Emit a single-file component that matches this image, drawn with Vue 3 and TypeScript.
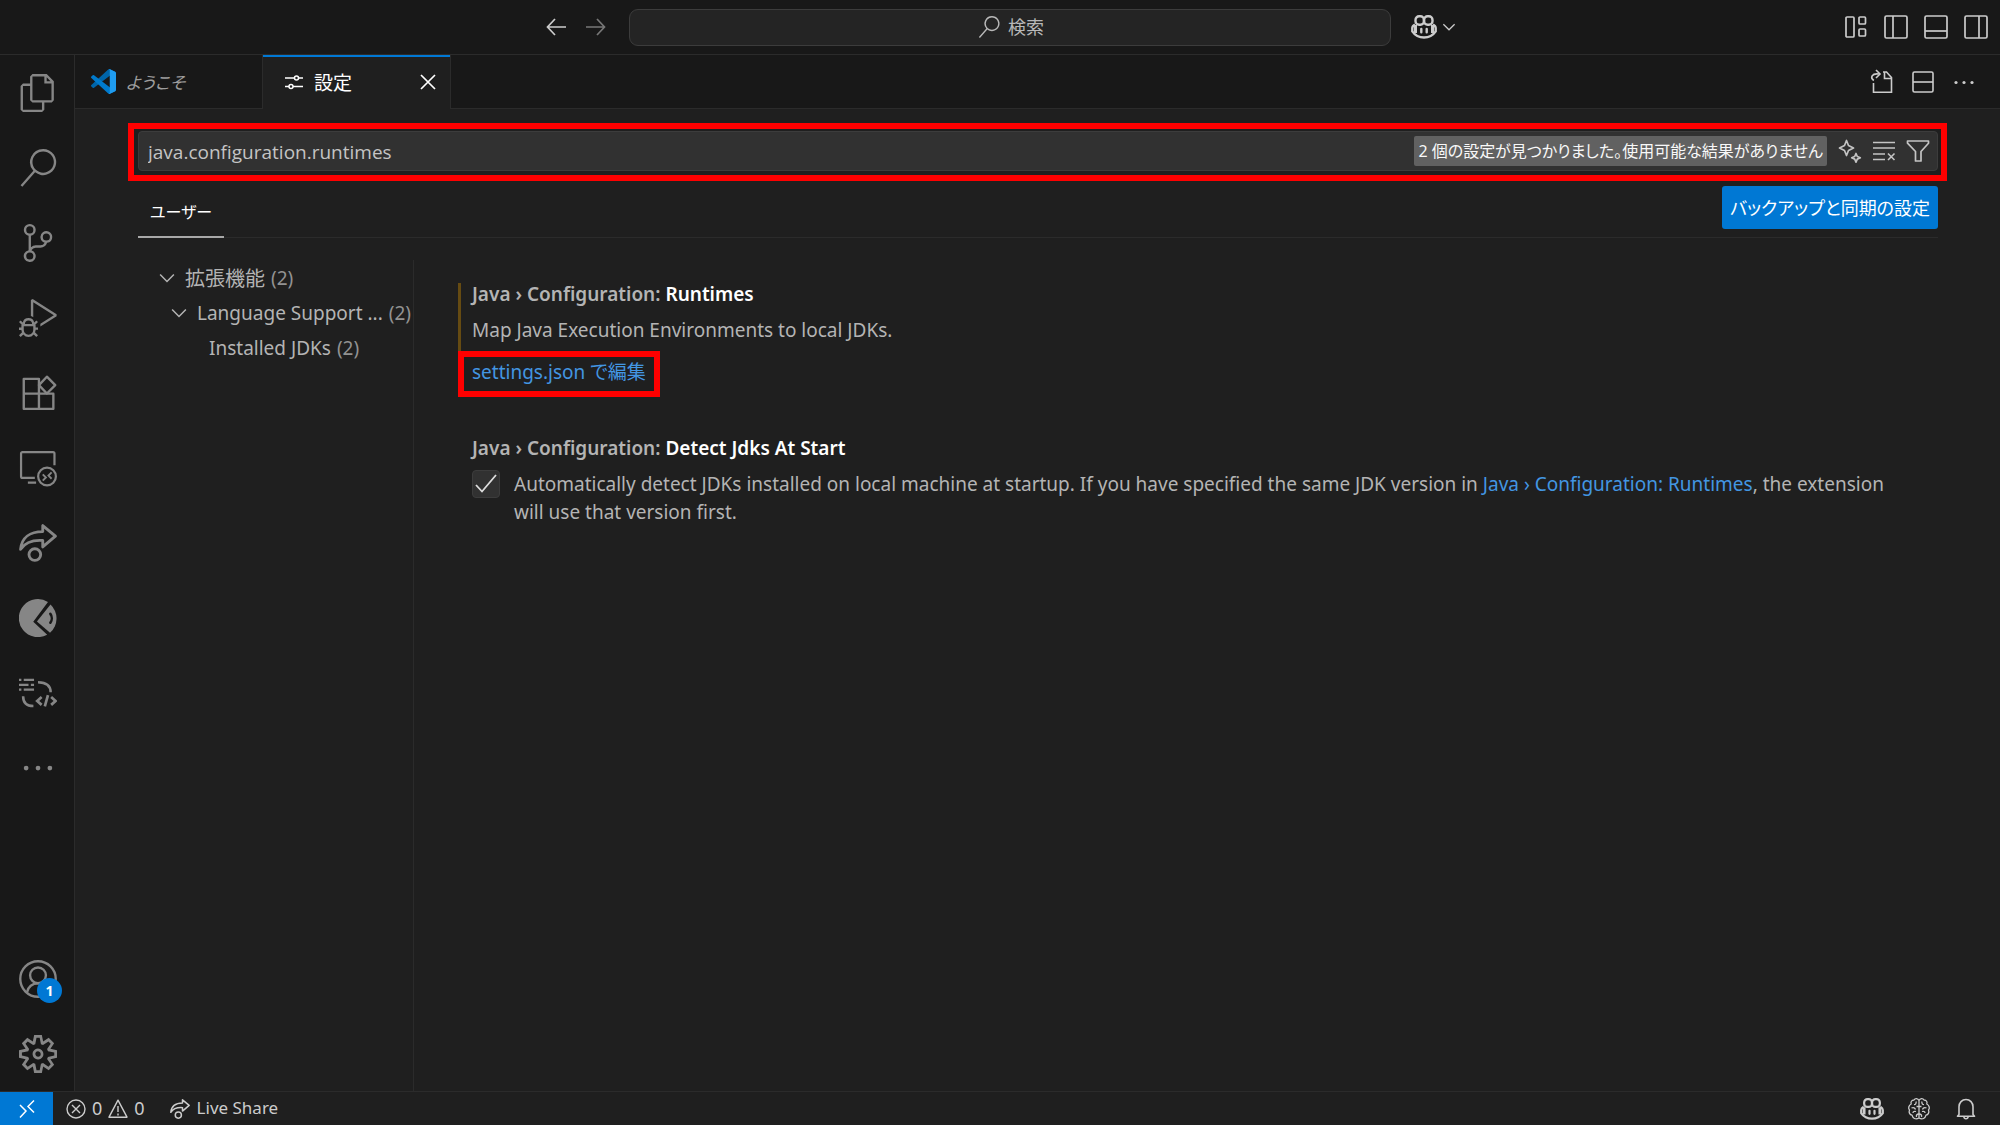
<script setup lang="ts">
import { ref } from 'vue'

interface ActivityItem {
  id: string
  label: string
}

const topItems: ActivityItem[] = [
  { id: 'files', label: 'エクスプローラー' },
  { id: 'search', label: '検索' },
  { id: 'scm', label: 'ソース管理' },
  { id: 'debug', label: '実行とデバッグ' },
  { id: 'extensions', label: '拡張機能' },
  { id: 'remote', label: 'リモート エクスプローラー' },
  { id: 'share', label: 'Live Share' },
  { id: 'disc', label: 'GitLens' },
  { id: 'convert', label: 'コード変換' },
  { id: 'more', label: 'その他' },
]

const query = ref('java.configuration.runtimes')
const detect = ref(true)
</script>

<template>
  <div class="workbench">
    <svg class="defs" aria-hidden="true">
      <symbol id="i-files" viewBox="0 0 24 24"><path fill="currentColor" d="M17.5 0h-9L7 1.5V6H2.5L1 7.5v15.07L2.5 24h12.07L16 22.57V18h4.7l1.3-1.43V4.5L17.5 0zm0 2.12l2.38 2.38H17.5V2.12zm-3 20.38h-12v-15H7v9.07L8.5 18h6v4.5zm6-6h-12v-15H16V6h4.5v10.5z" /></symbol>
      <symbol id="i-search" viewBox="0 0 24 24"><path fill="currentColor" d="M15.25 0a8.25 8.25 0 0 0-6.18 13.72L1 22.88l1.12 1 8.05-9.12A8.251 8.251 0 1 0 15.25.01V0zm0 15a6.75 6.75 0 1 1 0-13.5 6.75 6.75 0 0 1 0 13.5z" /></symbol>
      <symbol id="i-scm" viewBox="0 0 24 24"><path fill="currentColor" d="M21.007 8.222A3.738 3.738 0 0 0 15.045 5.2a3.737 3.737 0 0 0 1.156 6.583 2.988 2.988 0 0 1-2.668 1.67h-2.99a4.456 4.456 0 0 0-2.989 1.165V7.4a3.737 3.737 0 1 0-1.494 0v9.117a3.776 3.776 0 1 0 1.816.099 2.99 2.99 0 0 1 2.668-1.667h2.99a4.484 4.484 0 0 0 4.223-3.039 3.736 3.736 0 0 0 3.25-3.687zM4.565 3.738a2.242 2.242 0 1 1 4.484 0 2.242 2.242 0 0 1-4.484 0zm4.484 16.441a2.242 2.242 0 1 1-4.484 0 2.242 2.242 0 0 1 4.484 0zm8.221-9.715a2.242 2.242 0 1 1 0-4.485 2.242 2.242 0 0 1 0 4.485z" /></symbol>
      <symbol id="i-debug" viewBox="0 0 24 24"><path fill="currentColor" d="M10.94 13.5l-1.32 1.32a3.73 3.73 0 0 0-7.24 0L1.06 13.5 0 14.56l1.72 1.72-.22.22V18H0v1.5h1.5v.08c.077.489.214.966.41 1.42L0 22.94 1.06 24l1.65-1.65A4.308 4.308 0 0 0 6 24a4.31 4.31 0 0 0 3.29-1.65L10.94 24 12 22.94 10.09 21c.198-.464.336-.951.41-1.45v-.1H12V18h-1.5v-1.5l-.22-.22L12 14.56l-1.06-1.06zM6 13.5a2.25 2.25 0 0 1 2.25 2.25h-4.5A2.25 2.25 0 0 1 6 13.5zm3 6a3.33 3.33 0 0 1-3 3 3.33 3.33 0 0 1-3-3v-2.25h6v2.25zm14.76-9.9v1.26L13.5 17.37V15.6l8.5-5.37L9 2v9.46a5.07 5.07 0 0 0-1.5-.72V.63L8.64 0l15.12 9.6z" /></symbol>
      <symbol id="i-extensions" viewBox="0 0 24 24"><g fill="none" stroke="currentColor" stroke-width="1.5" stroke-linejoin="round"><path d="M3 3.100h9.600v18.900H3zM3 12.400h18.700v9.600H3z" /><path d="M17.600 1.700l5.300 5.300-5.300 5.300-5-5.300z" /></g></symbol>
      <symbol id="i-remote" viewBox="0 0 24 24"><g fill="none" stroke="currentColor" stroke-width="1.400"><path d="M10 18.300H2.200a.9.900 0 0 1-.9-.900V2.900a.9.900 0 0 1 .9-.900h19.300a.9.900 0 0 1 .9.900v7.300M5.600 21.300h5.200" /><circle cx="17.700" cy="17.400" r="5.600" /><path d="M15 16l2 2-2 2M20.600 14.800l-2 2 2 2" stroke-width="1.200" /></g></symbol>
      <symbol id="i-share" viewBox="0 0 24 24"><g fill="none" stroke="currentColor" stroke-width="1.800" stroke-linejoin="round"><path d="M15 1v3.800C7 4.800 1.600 8.500 1 16c3-4.600 8-6 14-5.600V14.500l8-6.800z" /><circle cx="10" cy="19.300" r="3.700" /></g></symbol>
      <symbol id="i-disc" viewBox="0 0 24 24"><path fill="currentColor" d="M18.300 1.900A12 12 0 1 0 17.800 22.500L9 14.400z" /><path fill="currentColor" d="M19.900 3.500A12 12 0 0 1 19.600 21.300L11.300 14.200z" /><path fill="none" stroke="#181818" stroke-width="1.600" stroke-linecap="round" d="M19.800 9.400c1.200 1.600 1.200 4 0 5.600" /></symbol>
      <symbol id="i-convert" viewBox="0 0 24 24"><g fill="none" stroke="currentColor" stroke-width="1.400"><path d="M0 3.700h1.500M3 3.700h6.500M0 6.800h6M7.500 6.800h2M0 9.900h1.500M3 9.900h6.500" /><path d="M12 5.200c5 .1 8 2 8 6.400" stroke-width="1.600" /><path d="M2.600 14c0 4 2.400 6.200 6.500 6.200" stroke-width="1.600" /><path d="M14.300 14.500L11.500 17l2.800 2.500M20.300 14.500l2.800 2.500-2.800 2.500M18.300 13.400l-2 7" stroke-width="1.700" /></g></symbol>
      <symbol id="i-more" viewBox="0 0 24 24"><g fill="currentColor"><circle cx="4.500" cy="12" r="1.500" /><circle cx="12" cy="12" r="1.500" /><circle cx="19.500" cy="12" r="1.500" /></g></symbol>
      <symbol id="i-account" viewBox="0 0 24 24"><g fill="none" stroke="currentColor" stroke-width="1.500"><circle cx="12" cy="12" r="11.200" /><circle cx="12" cy="9.700" r="5" /><path d="M5 20.500c.6-3.600 3.500-5.800 7-5.800s6.400 2.200 7 5.800" /></g></symbol>
      <symbol id="i-gear" viewBox="0 0 24 24"><path fill="currentColor" d="M19.850 8.750l4.150.830v4.840l-4.150.830 2.350 3.520-3.430 3.430-3.520-2.350-.830 4.150H9.580l-.830-4.150-3.520 2.350-3.430-3.430 2.350-3.520L0 14.420V9.580l4.150-.830L1.800 5.230 5.230 1.800l3.520 2.350L9.580 0h4.840l.830 4.150 3.520-2.350 3.430 3.430-2.350 3.520zm-1.570 5.070l4-.810v-2l-4-.810-.540-1.300 2.290-3.430-1.430-1.430-3.430 2.290-1.300-.540-.810-4h-2l-.810 4-1.300.540-3.430-2.290-1.430 1.430L6.380 8.900l-.540 1.300-4 .810v2l4 .810.540 1.300-2.290 3.430 1.430 1.430 3.430-2.290 1.300.540.810 4h2l.810-4 1.300-.540 3.430 2.290 1.430-1.430-2.290-3.430.540-1.300zm-8.186-4.672A3.430 3.430 0 0 1 12 8.570 3.440 3.440 0 0 1 15.430 12a3.430 3.430 0 1 1-5.336-2.852zm.956 4.274c.281.188.612.288.950.288A1.700 1.700 0 0 0 13.710 12a1.710 1.710 0 1 0-2.660 1.422z" /></symbol>
      <symbol id="i-chevron" viewBox="0 0 16 16"><path fill="none" stroke="currentColor" stroke-width="1.100" d="M3 5.500l5 5 5-5" /></symbol>
      <symbol id="i-copilot" viewBox="0 0 26 26">
        <g fill="none" stroke="currentColor" stroke-width="2.400"><rect x="4.500" y="2.300" width="8.500" height="8.500" rx="3.600" /><rect x="13" y="2.300" width="8.500" height="8.500" rx="3.600" /><path d="M4 10.500c-1.600.9-2.700 2.200-2.700 3.600v3.300C4 21.400 8.600 23.500 13 23.500s9-2.100 11.700-6.100v-3.300c0-1.400-1.100-2.700-2.700-3.600" /><path d="M4.500 11v8M21.500 11v8" stroke-width="3" /></g>
        <path stroke="currentColor" stroke-width="2.400" stroke-linecap="round" d="M10.300 15v3.200M15.700 15v3.200" />
      </symbol>
    </svg>

    <header class="titlebar">
      <nav class="history" aria-label="履歴">
        <button type="button" aria-label="戻る"><svg class="ic20" viewBox="0 0 20 20"><path fill="none" stroke="#ccc" stroke-width="1.700" d="M9 2L1.500 10 9 18M1.500 10H20" /></svg></button>
        <button type="button" aria-label="進む"><svg class="ic20" viewBox="0 0 20 20"><path fill="none" stroke="#777" stroke-width="1.700" d="M11 2l7.500 8-7.500 8M18.500 10H0" /></svg></button>
      </nav>
      <button type="button" class="command">
        <svg class="ic22"><use href="#i-search" /></svg><span>検索</span>
      </button>
      <div class="title-right">
        <button type="button" class="copilot" aria-label="Copilot">
          <svg class="ic26"><use href="#i-copilot" /></svg><svg class="ic18"><use href="#i-chevron" /></svg>
        </button>
        <div class="layouts">
          <button type="button" aria-label="レイアウトのカスタマイズ"><svg class="ic24" viewBox="0 0 24 24"><g fill="none" stroke="#ccc" stroke-width="1.700"><rect x="2" y="2" width="8" height="20" rx="1" /><rect x="15" y="2" width="6.500" height="7" rx="1" /><rect x="15" y="14" width="6.500" height="7" rx="1" /></g></svg></button>
          <button type="button" aria-label="プライマリ サイド バー"><svg class="ic24" viewBox="0 0 24 24"><g fill="none" stroke="#ccc" stroke-width="1.700"><rect x="1" y="1" width="22" height="22" rx="1.500" /><path d="M9 1v22" /></g></svg></button>
          <button type="button" aria-label="パネル"><svg class="ic24" viewBox="0 0 24 24"><g fill="none" stroke="#ccc" stroke-width="1.700"><rect x="1" y="1" width="22" height="22" rx="1.500" /><path d="M1 16h22" /></g></svg></button>
          <button type="button" aria-label="セカンダリ サイド バー"><svg class="ic24" viewBox="0 0 24 24"><g fill="none" stroke="#ccc" stroke-width="1.700"><rect x="1" y="1" width="22" height="22" rx="1.500" /><path d="M15 1v22" /></g></svg></button>
        </div>
      </div>
    </header>

    <div class="middle">
      <nav class="activity" aria-label="アクティビティ バー">
        <button v-for="item in topItems" :key="item.id" type="button" class="act" :aria-label="item.label">
          <svg class="ic38"><use :href="'#i-' + item.id" /></svg>
        </button>
        <span class="spring"></span>
        <button type="button" class="act" aria-label="アカウント">
          <svg class="ic38"><use href="#i-account" /></svg><span class="count-badge">1</span>
        </button>
        <button type="button" class="act" aria-label="管理"><svg class="ic38"><use href="#i-gear" /></svg></button>
      </nav>

      <main class="editor">
        <div class="tabs">
          <button type="button" class="tab welcome">
            <svg class="ic25" viewBox="0 0 100 100">
              <path fill="#0065a9" d="M96.500 10.800L75.900.900a6.200 6.200 0 0 0-7.100 1.200L1.300 63.600a4.200 4.200 0 0 0 0 6.200l5.500 5a4.200 4.200 0 0 0 5.300.2L93.400 13.400c2.700-2.100 6.600-.1 6.600 3.300v-.3a6.200 6.200 0 0 0-3.500-5.600z" />
              <path fill="#007acc" d="M96.500 89.200l-20.600 9.900a6.200 6.200 0 0 1-7.100-1.200L1.300 36.400a4.200 4.200 0 0 1 0-6.200l5.500-5a4.200 4.200 0 0 1 5.300-.2l81.300 61.600c2.700 2.100 6.600.1 6.600-3.300v.3a6.200 6.200 0 0 1-3.500 5.600z" />
              <path fill="#1f9cf0" d="M75.900 99.100a6.200 6.200 0 0 1-7.100-1.200c2.300 2.300 6.200.7 6.200-2.600V4.700c0-3.300-3.900-4.900-6.200-2.600a6.200 6.200 0 0 1 7.100-1.200l20.600 9.900a6.200 6.200 0 0 1 3.500 5.600v67.200a6.200 6.200 0 0 1-3.500 5.600z" />
            </svg>
            <span>ようこそ</span>
          </button>
          <div class="tab active">
            <svg class="ic18" viewBox="0 0 18 18"><g fill="none" stroke="#fff" stroke-width="1.500"><path d="M0 5h9.500M13.500 5H18M0 13.500h4M8 13.500h10" /><circle cx="11.500" cy="5" r="2" /><circle cx="6" cy="13.500" r="2" /></g></svg>
            <span>設定</span>
            <button type="button" class="close" aria-label="閉じる"><svg class="ic14" viewBox="0 0 14 14"><path stroke="#fff" stroke-width="1.700" d="M0 0l14 14M14 0L0 14" /></svg></button>
          </div>
          <div class="tab-actions">
            <button type="button" aria-label="設定 (JSON) を開く"><svg class="ic24" viewBox="0 0 24 24"><g fill="none" stroke="#ccc" stroke-width="1.600"><path d="M3.500 13v9.200h18V7.500L16.500 2H13M14.500 2v6.500h7" /><path d="M3.800 10.500C-.2 7.500 1.800 3.300 8.500 4M6 0l4 4-4 4" /></g></svg></button>
            <button type="button" aria-label="エディターの分割"><svg class="ic24" viewBox="0 0 24 24"><g fill="none" stroke="#ccc" stroke-width="1.600"><rect x="2" y="2" width="20" height="20" rx="1.500" /><path d="M2 12h20" /></g></svg></button>
            <button type="button" aria-label="その他の操作"><svg class="ic24" viewBox="0 0 24 24"><g fill="#ccc"><circle cx="4" cy="12.500" r="1.600" /><circle cx="12" cy="12.500" r="1.600" /><circle cx="20" cy="12.500" r="1.600" /></g></svg></button>
          </div>
        </div>

        <div class="settings">
          <div class="searchbox">
            <input v-model="query" type="text" aria-label="設定の検索" spellcheck="false" />
            <span class="found">2 個の設定が見つかりました。使用可能な結果がありません</span>
            <div class="search-actions">
              <button type="button" aria-label="AI で検索"><svg class="ic24" viewBox="0 0 24 24"><g fill="none" stroke="#c4c4c4" stroke-width="1.700" stroke-linejoin="round"><path d="M8.500 1.500l2 5 5 2.500-5 2.500-2 5-2-5-5-2.500 5-2.500zM18 14.500l1.300 3 3 1.300-3 1.300-1.300 3-1.300-3-3-1.300 3-1.300z" /></g></svg></button>
              <button type="button" aria-label="検索入力のクリア"><svg class="ic24" viewBox="0 0 24 24"><path fill="none" stroke="#c4c4c4" stroke-width="1.600" d="M1 3.500h22M1 9h22M1 15h12M1 20.500h12M16 14.500l6.500 6.500M22.500 14.500L16 21" /></svg></button>
              <button type="button" aria-label="フィルター"><svg class="ic24" viewBox="0 0 24 24"><path fill="none" stroke="#c4c4c4" stroke-width="1.700" stroke-linejoin="round" d="M1.500 2h21v2.200L15 12.500V22H9.500v-9.500L1.500 4.200z" /></svg></button>
            </div>
          </div>

          <div class="scope">
            <button type="button" class="scope-tab">ユーザー</button>
            <button type="button" class="sync">バックアップと同期の設定</button>
          </div>

          <div class="body">
            <ul class="toc">
              <li class="lv1"><svg class="ic22"><use href="#i-chevron" /></svg><span class="name">拡張機能</span><span class="num">(2)</span></li>
              <li class="lv2"><svg class="ic22"><use href="#i-chevron" /></svg><span class="name">Language Support ...</span><span class="num">(2)</span></li>
              <li class="lv3"><span class="name">Installed JDKs</span><span class="num">(2)</span></li>
            </ul>

            <div class="list">
              <section class="item modified">
                <h3>Java › Configuration: <b>Runtimes</b></h3>
                <p>Map Java Execution Environments to local JDKs.</p>
                <a href="#" class="edit">settings.json で編集</a>
              </section>
              <section class="item">
                <h3>Java › Configuration: <b>Detect Jdks At Start</b></h3>
                <div class="check">
                  <span class="tick">
                    <input id="detect" v-model="detect" type="checkbox" />
                    <svg v-if="detect" viewBox="0 0 28 28"><path fill="none" stroke="#ddd" stroke-width="1.800" d="M4 15l6 6.500L24 5" /></svg>
                  </span>
                  <label for="detect">Automatically detect JDKs installed on local machine at startup. If you have specified the same JDK version in <a href="#">Java › Configuration: Runtimes</a>, the extension will use that version first.</label>
                </div>
              </section>
            </div>
          </div>
        </div>
      </main>
    </div>

    <footer class="status">
      <button type="button" class="remote-btn" aria-label="リモート ウィンドウを開く"><svg class="ic18" viewBox="0 0 18 18"><path fill="none" stroke="#fff" stroke-width="1.500" d="M2 5l6 6-6 6.500M16 .500L10 6.500l6 6" /></svg></button>
      <button type="button" class="problems">
        <svg class="ic20" viewBox="0 0 20 20"><g fill="none" stroke="#ccc" stroke-width="1.400"><circle cx="10" cy="10" r="9" /><path d="M6 6l8 8M14 6l-8 8" /></g></svg><span>0</span>
        <svg class="ic20" viewBox="0 0 20 20"><path fill="none" stroke="#ccc" stroke-width="1.400" stroke-linejoin="round" d="M10 1.200l9 17H1zM10 7v6M10 14.500v2" /></svg><span>0</span>
      </button>
      <button type="button" class="live"><svg class="ic20"><use href="#i-share" /></svg><span>Live Share</span></button>
      <div class="status-right">
        <button type="button" aria-label="Copilot"><svg class="ic24"><use href="#i-copilot" /></svg></button>
        <button type="button" aria-label="インテリジェンス"><svg class="ic24" viewBox="0 0 24 24"><g fill="none" stroke="#ccc" stroke-width="1.300" stroke-linejoin="round"><path d="M12 3.500C11 1 8 1 7 3 4.500 3 3.500 5 4.200 7 1.500 8.500 1 11.500 2.500 13c-1 2.500.3 4.800 2.500 5.200.7 3 3.500 4.800 7 2.800zM12 3.500C13 1 16 1 17 3c2.500 0 3.500 2 2.800 4 2.700 1.500 3.200 4.500 1.700 6 1 2.500-.3 4.800-2.500 5.200-.7 3-3.500 4.800-7 2.800z" /><path d="M9 4.500c.5 2-.5 3-2 3.200M4.500 11c2-1 3.500 0 4 1.500M12 9.500H9.500M6 16c0-1.500 1.500-2 3-1.500M12 17c-2 0-3 1-2.500 3M15 4.500c-.5 2 .5 3 2 3.200M19.500 11c-2-1-3.500 0-4 1.500M12 9.500h2.500M18 16c0-1.500-1.500-2-3-1.500M12 17c2 0 3 1 2.500 3" /></g></svg></button>
        <button type="button" aria-label="通知"><svg class="ic24" viewBox="0 0 24 24"><g fill="none" stroke="#ccc" stroke-width="1.600" stroke-linejoin="round"><path d="M5 17.500V9.800C5 5.600 8 2.500 12 2.500s7 3.100 7 7.300v7.700l1.500 1.800h-17z" /><path d="M9.800 19.500c.3 3 4.100 3 4.400 0" /></g></svg></button>
      </div>
    </footer>
  </div>
</template>

<style>
body {
  margin: 0;
  background: #1f1f1f;
}
</style>

<style scoped>
.workbench {
  display: flex;
  flex-direction: column;
  min-height: 100vh;
  background: #1f1f1f;
  color: #b4b4b4;
  font-family: "Noto Sans", "Noto Sans CJK JP", sans-serif;
  font-size: 19px;
  font-feature-settings: "palt";
}
.workbench * {
  box-sizing: border-box;
}
.defs {
  position: absolute;
  width: 0;
  height: 0;
}
button {
  display: flex;
  align-items: center;
  margin: 0;
  padding: 0;
  border: 0;
  background: none;
  color: inherit;
  font: inherit;
  font-feature-settings: inherit;
  white-space: nowrap;
}
svg {
  display: block;
  flex: none;
  overflow: visible;
}
.ic14 { width: 14px; height: 14px; }
.ic18 { width: 18px; height: 18px; }
.ic20 { width: 20px; height: 20px; }
.ic22 { width: 22px; height: 22px; }
.ic24 { width: 24px; height: 24px; }
.ic25 { width: 25px; height: 25px; }
.ic26 { width: 26px; height: 26px; }
.ic38 { width: 38px; height: 38px; }

.titlebar {
  display: grid;
  grid-template-columns: minmax(0, 629fr) minmax(0, 762fr) minmax(0, 609fr);
  align-items: center;
  height: 55px;
  background: #181818;
  border-bottom: 1px solid #2b2b2b;
}
.history {
  display: flex;
  justify-content: flex-end;
  gap: 20px;
  padding-right: 23px;
}
.command {
  justify-content: center;
  gap: 8px;
  height: 37px;
  padding-left: 2px;
  border: 1px solid #3c3c3c;
  border-radius: 9px;
  background: #242424;
  color: #b8b8b8;
  font-size: 18px;
  line-height: 24px;
}
.title-right {
  display: flex;
  justify-content: space-between;
  padding: 0 12px 0 20px;
  color: #ccc;
}
.copilot {
  gap: 3px;
}
.layouts {
  display: flex;
  gap: 16px;
}

.middle {
  display: flex;
  flex: 1;
}
.activity {
  display: flex;
  flex-direction: column;
  width: 75px;
  padding-left: 1px;
  border-right: 1px solid #2b2b2b;
  background: #181818;
  color: #868686;
}
.act {
  position: relative;
  justify-content: center;
  height: 75px;
}
.spring {
  flex: 1;
}
.count-badge {
  position: absolute;
  right: 12px;
  bottom: 13px;
  width: 25px;
  height: 25px;
  border-radius: 50%;
  background: #0078d4;
  color: #fff;
  font-size: 14px;
  font-weight: 700;
  line-height: 25px;
  text-align: center;
}

.editor {
  display: flex;
  flex: 1;
  flex-direction: column;
  min-width: 0;
}
.tabs {
  display: flex;
  height: 54px;
  background: #181818;
}
.tab {
  display: flex;
  align-items: center;
  width: 188px;
  padding: 0 16px;
  border-right: 1px solid #2b2b2b;
  border-bottom: 1px solid #2b2b2b;
}
.welcome {
  gap: 10px;
  color: #9d9d9d;
  font-size: 17px;
  font-style: italic;
}
.active {
  gap: 11px;
  padding: 0 15px 0 22px;
  border-bottom: 0;
  background: #1f1f1f;
  box-shadow: inset 0 2px #0078d4;
  color: #fff;
}
.close {
  margin-left: auto;
}
.tab-actions {
  display: flex;
  flex: 1;
  justify-content: flex-end;
  gap: 17px;
  padding-right: 24px;
  border-bottom: 1px solid #2b2b2b;
}

.settings {
  display: flex;
  flex: 1;
  flex-direction: column;
  padding: 22px 62px 0 63px;
}
.searchbox {
  display: flex;
  align-items: center;
  position: relative;
  height: 40px;
  padding: 0 7px 0 9px;
  border: 1px solid #3c3c3c;
  border-radius: 4px;
  background: #313131;
}
.searchbox::after {
  content: "";
  position: absolute;
  inset: -9px -10px -11px -11px;
  border: 6px solid #f00;
  pointer-events: none;
}
.searchbox input {
  flex: 1;
  min-width: 0;
  padding: 2px 0 0;
  border: 0;
  outline: 0;
  background: none;
  color: #c4c4c4;
  font-family: "Open Sans", "Noto Sans CJK JP", sans-serif;
  font-size: 19px;
}
.found {
  padding: 0 4px;
  border-radius: 2px;
  background: #616161;
  color: #f8f8f8;
  font-size: 16px;
  line-height: 30px;
  white-space: nowrap;
}
.search-actions {
  display: flex;
  gap: 10px;
  margin-left: 11px;
}
.scope {
  display: flex;
  justify-content: space-between;
  align-items: flex-start;
  height: 67px;
  padding-top: 15px;
  border-bottom: 1px solid #2b2b2b;
}
.scope-tab {
  height: 52px;
  padding: 0 12px;
  border-bottom: 2px solid #a8a8a8;
  color: #fff;
  font-size: 16px;
}
.sync {
  height: 43px;
  padding: 0 8px 2px;
  border-radius: 3px;
  background: #0078d4;
  color: #fff;
  font-size: 18px;
}
.body {
  display: flex;
  flex: 1;
}
.toc {
  width: 276px;
  margin: 22px 0 0;
  padding: 0;
  border-right: 1px solid #2b2b2b;
  list-style: none;
}
.toc li {
  display: flex;
  align-items: center;
  height: 35px;
  white-space: nowrap;
}
.toc svg {
  margin-right: 7px;
}
.num {
  margin-left: 6px;
  color: #929292;
}
.lv1 { padding-left: 18px; }
.lv1 .name { font-size: 20px; }
.lv2 { padding-left: 30px; }
.lv3 { padding-left: 71px; }

.list {
  flex: 1;
  padding: 45px 36px 0 44px;
}
.item {
  padding: 0 0 46px 14px;
}
.modified {
  position: relative;
}
.modified::before {
  content: "";
  position: absolute;
  top: 0;
  left: 0;
  width: 3px;
  height: 72px;
  background: #664b12;
}
h3,
p {
  margin: 0;
  font-size: inherit;
  line-height: 22px;
}
h3 {
  font-weight: 600;
}
h3 b {
  color: #fff;
  font-weight: 600;
}
p {
  margin: 14px 0 12px;
}
a {
  color: #4396e2;
  text-decoration: none;
}
.edit {
  position: relative;
  display: inline-block;
  line-height: 38px;
}
.edit::after {
  content: "";
  position: absolute;
  inset: -2px -14px -6px -14px;
  border: 6px solid #f00;
}
.check {
  display: flex;
  gap: 14px;
  margin-top: 11px;
}
.tick {
  position: relative;
  flex: none;
  width: 28px;
  height: 28px;
}
.tick input {
  appearance: none;
  display: block;
  width: 28px;
  height: 28px;
  margin: 0;
  border: 1px solid #3c3c3c;
  border-radius: 4px;
  background: #313131;
}
.tick svg {
  position: absolute;
  inset: 0;
  pointer-events: none;
}
.check label {
  line-height: 28px;
}

.status {
  display: flex;
  align-items: stretch;
  height: 34px;
  border-top: 1px solid #2b2b2b;
  color: #ccc;
  font-size: 18px;
}
.remote-btn {
  justify-content: center;
  width: 53px;
  background: #0078d4;
}
.problems {
  gap: 6px;
  margin-left: 13px;
}
.live {
  gap: 7px;
  margin-left: 25px;
  font-size: 17px;
}
.problems span,
.live span {
  padding-bottom: 2px;
}
.status-right {
  display: flex;
  gap: 23px;
  margin-left: auto;
  padding-right: 22px;
}
</style>
